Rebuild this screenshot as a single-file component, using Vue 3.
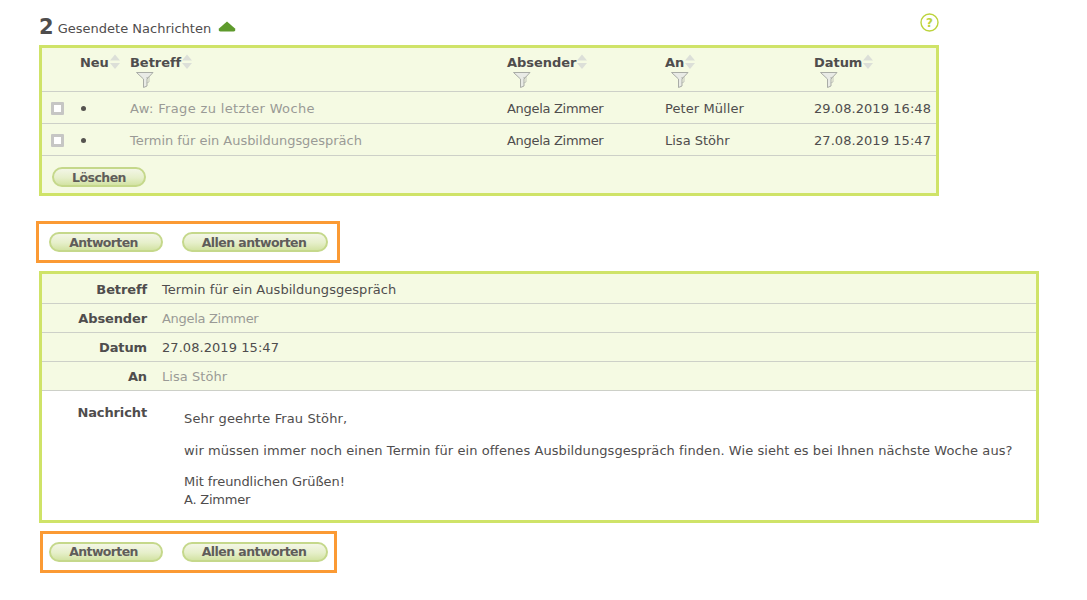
<script setup>
const cols = [
  { label: 'Neu', w: 50 },
  { label: 'Betreff', w: 377, filter: true },
  { label: 'Absender', w: 158, filter: true },
  { label: 'An', w: 149, filter: true },
  { label: 'Datum', w: 122, filter: true },
]
const rows = [
  { subject: 'Aw: Frage zu letzter Woche', sls: 0.35, from: 'Angela Zimmer', to: 'Peter Müller', tls: 0.08, date: '29.08.2019 16:48' },
  { subject: 'Termin für ein Ausbildungsgespräch', sls: -0.03, from: 'Angela Zimmer', to: 'Lisa Stöhr', tls: 0, date: '27.08.2019 15:47' },
]
const meta = [
  { k: 'Betreff', v: 'Termin für ein Ausbildungsgespräch', ls: 0.04 },
  { k: 'Absender', v: 'Angela Zimmer', muted: true, ls: -0.3 },
  { k: 'Datum', v: '27.08.2019 15:47', ls: 0.06 },
  { k: 'An', v: 'Lisa Stöhr', muted: true, ls: 0.05 },
]
</script>

<template>
  <div class="page">
    <div class="head">
      <div class="title">
        <span class="count">2</span>
        <span class="title-text">Gesendete Nachrichten</span>
        <svg class="up" width="18" height="12" viewBox="0 0 18 12"><path d="M9 0.5 L17 7.5 Q18 10.5 15.5 10.5 L2.5 10.5 Q0 10.5 1 7.5 Z" fill="#5e9a2c"/></svg>
      </div>
      <svg class="help" width="19" height="19" viewBox="0 0 19 19">
        <circle cx="9.5" cy="9.5" r="8.5" fill="none" stroke="#bcd33c" stroke-width="1.4"/>
        <text x="9.5" y="13.5" text-anchor="middle" class="help-q">?</text>
      </svg>
    </div>

    <div class="list">
      <div class="grid hdr">
        <div class="c-check"></div>
        <div v-for="c in cols" :key="c.label" class="hcell" :style="{ width: c.w + 'px' }">
          <div class="hlabel">
            <span>{{ c.label }}</span>
            <svg class="sort" width="10" height="16" viewBox="0 0 10 16">
              <path d="M5 0.5 L10 6.5 L0 6.5 Z" fill="#dcdfd8"/>
              <path d="M0 9 L10 9 L5 15 Z" fill="#dcdfd8"/>
            </svg>
          </div>
          <svg v-if="c.filter" class="funnel" width="18" height="16" viewBox="0 0 18 16">
            <path d="M0.5 0.5 L17 0.5 L11 7 L11 14 L7.5 15.5 L7.5 7 Z" fill="#e9ebe6" stroke="#a9aca6" stroke-width="1"/>
            <path d="M10 6 L13 5 L13 10 L10.5 11" fill="none" stroke="#b6b9b2" stroke-width="0.8"/>
          </svg>
        </div>
      </div>
      <div v-for="r in rows" :key="r.subject" class="grid row">
        <div class="c-check"><span class="box"></span></div>
        <div class="cell" style="width:50px"><span class="dot"></span></div>
        <div class="cell muted" style="width:377px" :style="{ letterSpacing: r.sls + 'px' }">{{ r.subject }}</div>
        <div class="cell from" style="width:158px">{{ r.from }}</div>
        <div class="cell" style="width:149px" :style="{ letterSpacing: r.tls + 'px' }">{{ r.to }}</div>
        <div class="cell date" style="width:122px">{{ r.date }}</div>
      </div>
      <div class="list-foot">
        <button class="btn del">Löschen</button>
      </div>
    </div>

    <div class="actions top">
      <button class="btn a1">Antworten</button>
      <button class="btn a2">Allen antworten</button>
    </div>

    <div class="detail">
      <div v-for="m in meta" :key="m.k" class="mrow">
        <div class="mk">{{ m.k }}</div>
        <div class="mv" :class="{ muted: m.muted }" :style="{ letterSpacing: m.ls + 'px' }">{{ m.v }}</div>
      </div>
      <div class="mbody">
        <div class="mk nk">Nachricht</div>
        <div class="msg">
          <p class="l1">Sehr geehrte Frau Stöhr,</p>
          <p class="l2">wir müssen immer noch einen Termin für ein offenes Ausbildungsgespräch finden. Wie sieht es bei Ihnen nächste Woche aus?</p>
          <p class="l3">Mit freundlichen Grüßen!<br><span class="sig">A. Zimmer</span></p>
        </div>
      </div>
    </div>

    <div class="actions bottom">
      <button class="btn a1">Antworten</button>
      <button class="btn a2">Allen antworten</button>
    </div>
  </div>
</template>

<style scoped>
.page {
  box-sizing: border-box;
  width: 1087px;
  height: 600px;
  padding: 13px 0 0 39px;
  font-family: "DejaVu Sans", sans-serif;
  font-size: 13px;
  color: #4f4d4d;
  background: #fff;
  overflow: hidden;
}
.head {
  width: 900px;
  height: 32px;
  display: flex;
  justify-content: space-between;
  align-items: flex-start;
}
.title {
  display: flex;
  align-items: flex-start;
  height: 28px;
}
.count { font-size: 21px; font-weight: 700; line-height: 28px; }
.title-text { font-size: 13px; margin-left: 4px; line-height: 32px; letter-spacing: 0.01px; }
.up { margin-left: 7px; margin-top: 8px; }
.help-q { font: 700 12px "DejaVu Sans", sans-serif; fill: #bcd33c; }
.list {
  box-sizing: border-box;
  width: 900px;
  height: 151px;
  border: 3px solid #cfe368;
  background: #f5fae3;
}
.grid { display: flex; border-bottom: 1px solid #cdd0c8; }
.c-check { width: 38px; flex: none; display: flex; align-items: center; padding-left: 9px; box-sizing: border-box; }
.hdr { height: 43px; }
.hcell { flex: none; padding-top: 6px; box-sizing: border-box; }
.hlabel { display: flex; align-items: flex-start; font-weight: 700; line-height: 18px; height: 18px; letter-spacing: -0.05px; }
.sort { margin-left: 1px; }
.funnel { display: block; margin-left: 6px; }
.row { align-items: center; padding-top: 2px; height: 29px; }
.cell { flex: none; line-height: 18px; }
.from { letter-spacing: -0.3px; }
.date { letter-spacing: 0.06px; }
.muted { color: #9a9a96; }
.box {
  display: block;
  width: 13px; height: 13px;
  box-sizing: border-box;
  border: 3px solid #c6c6c4;
  background: #fff;
  border-radius: 1px;
}
.dot { display: block; width: 5px; height: 5px; background: #55534f; border-radius: 50%; margin-left: 1px; }
.list-foot { padding: 11px 0 0 10px; }
.btn {
  box-sizing: border-box;
  display: block;
  height: 20px;
  padding: 1px 0 0;
  border: 2px solid #c5d88b;
  border-radius: 10px;
  background: linear-gradient(#f3f6e6, #e6efca 55%, #d3e3a4);
  font: 700 12.5px/15px "DejaVu Sans", sans-serif;
  letter-spacing: -0.55px;
  color: #5f5d5a;
  text-align: center;
}
.del { width: 94px; }
.a1 { width: 114px; padding-right: 5px; letter-spacing: -0.62px; }
.a2 { width: 146px; margin-left: 19px; padding-right: 2px; }
.bottom .btn { padding-top: 0; padding-bottom: 2px; }
.actions {
  box-sizing: border-box;
  display: flex;
  height: 42px;
  border: 3px solid #fb9a34;
  padding-top: 8px;
}
.top { width: 304px; margin: 25px 0 8px -3px; padding-left: 10px; }
.bottom { width: 297px; margin: 8px 0 0 1px; padding-left: 6px; }
.detail {
  box-sizing: border-box;
  width: 1000px;
  height: 252px;
  border: 3px solid #cfe368;
  background: #fff;
}
.mrow {
  display: flex;
  height: 29px;
  box-sizing: border-box;
  border-bottom: 1px solid #cdd0c8;
  background: #f5fae3;
  line-height: 30px;
}
.mrow:first-child { height: 30px; line-height: 32px; }
.mk { width: 105px; flex: none; text-align: right; font-weight: 700; letter-spacing: -0.12px; }
.mv { margin-left: 15px; }
.mbody { display: flex; }
.nk { line-height: 18px; padding-top: 13px; }
.msg { margin-left: 37px; padding-top: 10px; line-height: 18px; }
.msg p { margin: 9px 0 0; padding: 0; }
.msg .l1 { letter-spacing: 0.125px; }
.msg .l2 { margin-top: 14px; letter-spacing: 0.07px; }
.msg .l3 { margin-top: 13px; letter-spacing: -0.08px; }
.sig { letter-spacing: -0.22px; }
</style>
